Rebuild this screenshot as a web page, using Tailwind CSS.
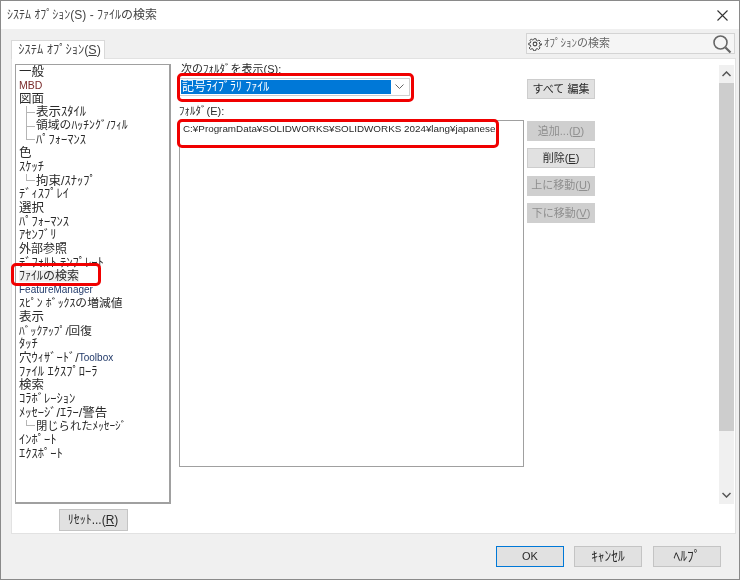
<!DOCTYPE html>
<html lang="ja">
<head>
  <meta charset="UTF-8">
  <script src="https://cdn.jsdelivr.net/npm/@tailwindcss/browser@4"></script>
  <title>ｼｽﾃﾑ ｵﾌﾟｼｮﾝ(S) - ﾌｧｲﾙの検索</title>
</head>
<body class="w-[740px] h-[580px] overflow-hidden bg-white text-[11.5px] leading-none text-[#2a2a2a] font-['Liberation_Sans','Noto_Sans_CJK_JP',sans-serif]">
  <div class="relative w-[740px] h-[580px] flex flex-col border border-[#8a8a8a] bg-[#f0f0f0] blur-[0.35px]">

    <!-- title bar -->
    <div class="h-[28px] shrink-0 bg-white flex items-center pl-[6px] pr-[11px] justify-between text-[#444]">
      <span class="text-[12px]">ｼｽﾃﾑ ｵﾌﾟｼｮﾝ(S) - ﾌｧｲﾙの検索</span>
      <svg width="11" height="11" viewBox="0 0 11 11" fill="none" stroke="#333" stroke-width="1.1"><path d="M0.5 0.5l10 10M10.5 0.5l-10 10"/></svg>
    </div>

    <!-- tab strip -->
    <div class="h-[29px] shrink-0 flex items-end justify-between pl-[10px] pr-[4px] relative">
      <div class="w-[94px] h-[19px] bg-white border border-b-0 border-[#d9d9d9] flex items-center justify-center pl-[3px] text-[12.5px] text-[#444] -mb-px z-10">ｼｽﾃﾑ ｵﾌﾟｼｮﾝ(<span class="underline">S</span>)</div>
      <div class="w-[209px] h-[21px] mb-[4px] bg-[#f5f5f5] border border-[#d4d4d4] flex items-center pl-[1px] pr-[2px] gap-[2px] text-[#666] text-[11px]">
        <svg width="14" height="14" viewBox="0 0 24 24" fill="none" stroke="#444" stroke-width="1.8"><circle cx="12" cy="12" r="3.2"/><path d="M10 2h4l.6 3 2.4 1 2.6-1.6 2.8 2.8L20 9.8l1 2.4 3 .6v-1.6 2.8l-3 .6-1 2.4 1.6 2.6-2.8 2.8-2.6-1.6-2.4 1-.6 3h-4l-.6-3-2.4-1-2.6 1.6-2.8-2.8L4 16.4l-1-2.4-3-.6v-2.8l3-.6 1-2.4-1.6-2.6 2.8-2.8L7 4.6l2.4-1z" transform="translate(1.2 1.2) scale(.9)"/></svg>
        <span class="flex-1">ｵﾌﾟｼｮﾝの検索</span>
        <svg width="20" height="20" viewBox="0 0 20 20" fill="none" stroke="#666" stroke-width="1.6"><circle cx="8.5" cy="8.5" r="6.5"/><path d="M13.5 13.5l5 5" stroke-width="2.2"/></svg>
      </div>
    </div>

    <!-- white panel -->
    <div class="relative h-[476px] shrink-0 ml-[10px] mr-[3px] bg-white border border-[#e2e2e2] flex pl-[3px] pt-[5px]">

      <!-- tree column -->
      <div class="w-[156px] shrink-0 flex flex-col items-center">
        <div class="w-[156px] h-[440px] border border-[#a0a0a0] border-r-2 border-b-2 pl-[3px] flex flex-col justify-start text-[12.5px]">
          <div class="h-[13.65px] flex items-center">一般</div>
          <div class="h-[13.65px] flex items-center text-[10.5px] text-[#7a2a2a] font-medium">MBD</div>
          <div class="h-[13.65px] flex items-center">図面</div>
          <div class="h-[13.65px] flex items-center pl-[7px]"><span class="w-[9px] h-full mr-[1px] border-l border-[#b5b5b5] flex items-center"><span class="w-full border-t border-[#b5b5b5]"></span></span>表示ｽﾀｲﾙ</div>
          <div class="h-[13.65px] flex items-center pl-[7px] text-[11.8px]"><span class="w-[9px] h-full mr-[1px] border-l border-[#b5b5b5] flex items-center"><span class="w-full border-t border-[#b5b5b5]"></span></span>領域のﾊｯﾁﾝｸﾞ/ﾌｨﾙ</div>
          <div class="h-[13.65px] flex items-center pl-[7px]"><span class="w-[9px] h-1/2 mr-[1px] self-start border-l border-b border-[#b5b5b5]"></span>ﾊﾟﾌｫｰﾏﾝｽ</div>
          <div class="h-[13.65px] flex items-center">色</div>
          <div class="h-[13.65px] flex items-center">ｽｹｯﾁ</div>
          <div class="h-[13.65px] flex items-center pl-[7px]"><span class="w-[9px] h-1/2 mr-[1px] self-start border-l border-b border-[#b5b5b5]"></span>拘束/ｽﾅｯﾌﾟ</div>
          <div class="h-[13.65px] flex items-center">ﾃﾞｨｽﾌﾟﾚｲ</div>
          <div class="h-[13.65px] flex items-center">選択</div>
          <div class="h-[13.65px] flex items-center">ﾊﾟﾌｫｰﾏﾝｽ</div>
          <div class="h-[13.65px] flex items-center">ｱｾﾝﾌﾞﾘ</div>
          <div class="h-[13.65px] flex items-center text-[12px]">外部参照</div>
          <div class="h-[13.65px] flex items-center">ﾃﾞﾌｫﾙﾄ ﾃﾝﾌﾟﾚｰﾄ</div>
          <div class="h-[13.65px] flex items-center text-[12px]"><span class="bg-[#f0f0f0]">ﾌｧｲﾙの検索</span></div>
          <div class="h-[13.65px] flex items-center text-[10px] text-[#223a6a]">FeatureManager</div>
          <div class="h-[13.65px] flex items-center text-[11.8px]">ｽﾋﾟﾝ ﾎﾞｯｸｽの増減値</div>
          <div class="h-[13.65px] flex items-center">表示</div>
          <div class="h-[13.65px] flex items-center text-[11.6px]">ﾊﾞｯｸｱｯﾌﾟ/回復</div>
          <div class="h-[13.65px] flex items-center">ﾀｯﾁ</div>
          <div class="h-[13.65px] flex items-center">穴ｳｨｻﾞｰﾄﾞ/<span class="text-[10px] text-[#223a6a]">Toolbox</span></div>
          <div class="h-[13.65px] flex items-center">ﾌｧｲﾙ ｴｸｽﾌﾟﾛｰﾗ</div>
          <div class="h-[13.65px] flex items-center">検索</div>
          <div class="h-[13.65px] flex items-center">ｺﾗﾎﾞﾚｰｼｮﾝ</div>
          <div class="h-[13.65px] flex items-center">ﾒｯｾｰｼﾞ/ｴﾗｰ/警告</div>
          <div class="h-[13.65px] flex items-center pl-[7px] text-[11.3px]"><span class="w-[9px] h-1/2 mr-[1px] self-start border-l border-b border-[#b5b5b5]"></span>閉じられたﾒｯｾｰｼﾞ</div>
          <div class="h-[13.65px] flex items-center">ｲﾝﾎﾟｰﾄ</div>
          <div class="h-[13.65px] flex items-center">ｴｸｽﾎﾟｰﾄ</div>
        </div>
        <button class="mt-[5px] w-[69px] h-[22px] bg-[#e1e1e1] border border-[#c4c4c4] flex items-center justify-center text-[12px]">ﾘｾｯﾄ...(<span class="underline">R</span>)</button>
      </div>

      <!-- folder column -->
      <div class="w-[345px] shrink-0 ml-[8px] flex flex-col">
        <div class="h-[11px] pl-[2px] text-[11px] flex items-center">次のﾌｫﾙﾀﾞを表示(S):</div>
        <div class="mt-[3px] h-[18px] w-[231px] bg-white border border-[#cfcfcf] flex items-center p-[1px]">
          <div class="flex-1 h-full bg-[#0078d7] text-white text-[12px] flex items-center pl-[1px]">記号ﾗｲﾌﾞﾗﾘ ﾌｧｲﾙ</div>
          <svg class="mx-[4px]" width="9" height="6" viewBox="0 0 9 6" fill="none" stroke="#666"><path d="M.5.5l4 4 4-4"/></svg>
        </div>
        <div class="h-[11px] mt-[10px] text-[11px] flex items-center">ﾌｫﾙﾀﾞ(E):</div>
        <div class="mt-[3px] w-[345px] h-[347px] border border-[#a0a0a0] pl-[3px] pt-[3px] text-[9.85px]">C:¥ProgramData¥SOLIDWORKS¥SOLIDWORKS 2024¥lang¥japanese</div>
      </div>

      <!-- buttons column -->
      <div class="w-[68px] shrink-0 ml-[3px] flex flex-col text-[11px]">
        <button class="mt-[15px] h-[20px] w-[68px] bg-[#e1e1e1] border border-[#cdcdcd]">すべて 編集</button>
        <button class="mt-[22px] h-[20px] w-[68px] bg-[#cfcfcf] text-[#8f8f8f]">追加...(<span class="underline">D</span>)</button>
        <button class="mt-[7.4px] h-[20px] w-[68px] bg-[#e1e1e1] border border-[#cdcdcd]">削除(<span class="underline">E</span>)</button>
        <button class="mt-[7.4px] h-[20px] w-[68px] bg-[#cfcfcf] text-[#8f8f8f]">上に移動(<span class="underline">U</span>)</button>
        <button class="mt-[7.4px] h-[20px] w-[68px] bg-[#cfcfcf] text-[#8f8f8f]">下に移動(<span class="underline">V</span>)</button>
      </div>

      <!-- scrollbar -->
      <div class="ml-auto mr-[1px] mt-[1px] w-[15px] h-[439px] bg-[#f0f0f0] flex flex-col items-center">
        <svg class="my-[6px]" width="9" height="6" viewBox="0 0 9 6" fill="none" stroke="#555" stroke-width="1.5"><path d="M.5 5l4-4 4 4"/></svg>
        <div class="w-full h-[348px] bg-[#cdcdcd]"></div>
        <svg class="mt-auto mb-[6px]" width="9" height="6" viewBox="0 0 9 6" fill="none" stroke="#555" stroke-width="1.5"><path d="M.5 1l4 4 4-4"/></svg>
      </div>
    </div>

    <!-- footer buttons -->
    <div class="flex-1 flex items-start justify-end pt-[12px] pr-[18px] gap-[10px] text-[13.5px]">
      <button class="w-[68px] h-[21px] bg-[#e1e1e1] border-[1.5px] border-[#0078d7] text-[11px] font-medium">OK</button>
      <button class="w-[68px] h-[21px] bg-[#e1e1e1] border border-[#c4c4c4]">ｷｬﾝｾﾙ</button>
      <button class="w-[68px] h-[21px] bg-[#e1e1e1] border border-[#c4c4c4] ml-[1px]">ﾍﾙﾌﾟ</button>
    </div>

    <!-- red annotations -->
    <div class="absolute left-[176px] top-[72px] w-[237px] h-[29px] border-[3px] border-[#f00000] rounded-[5px]"></div>
    <div class="absolute left-[176px] top-[118px] w-[322px] h-[29px] border-[3px] border-[#f00000] rounded-[5px]"></div>
    <div class="absolute left-[10px] top-[262px] w-[90px] h-[23px] border-[3px] border-[#f00000] rounded-[5px]"></div>
  </div>
</body>
</html>
